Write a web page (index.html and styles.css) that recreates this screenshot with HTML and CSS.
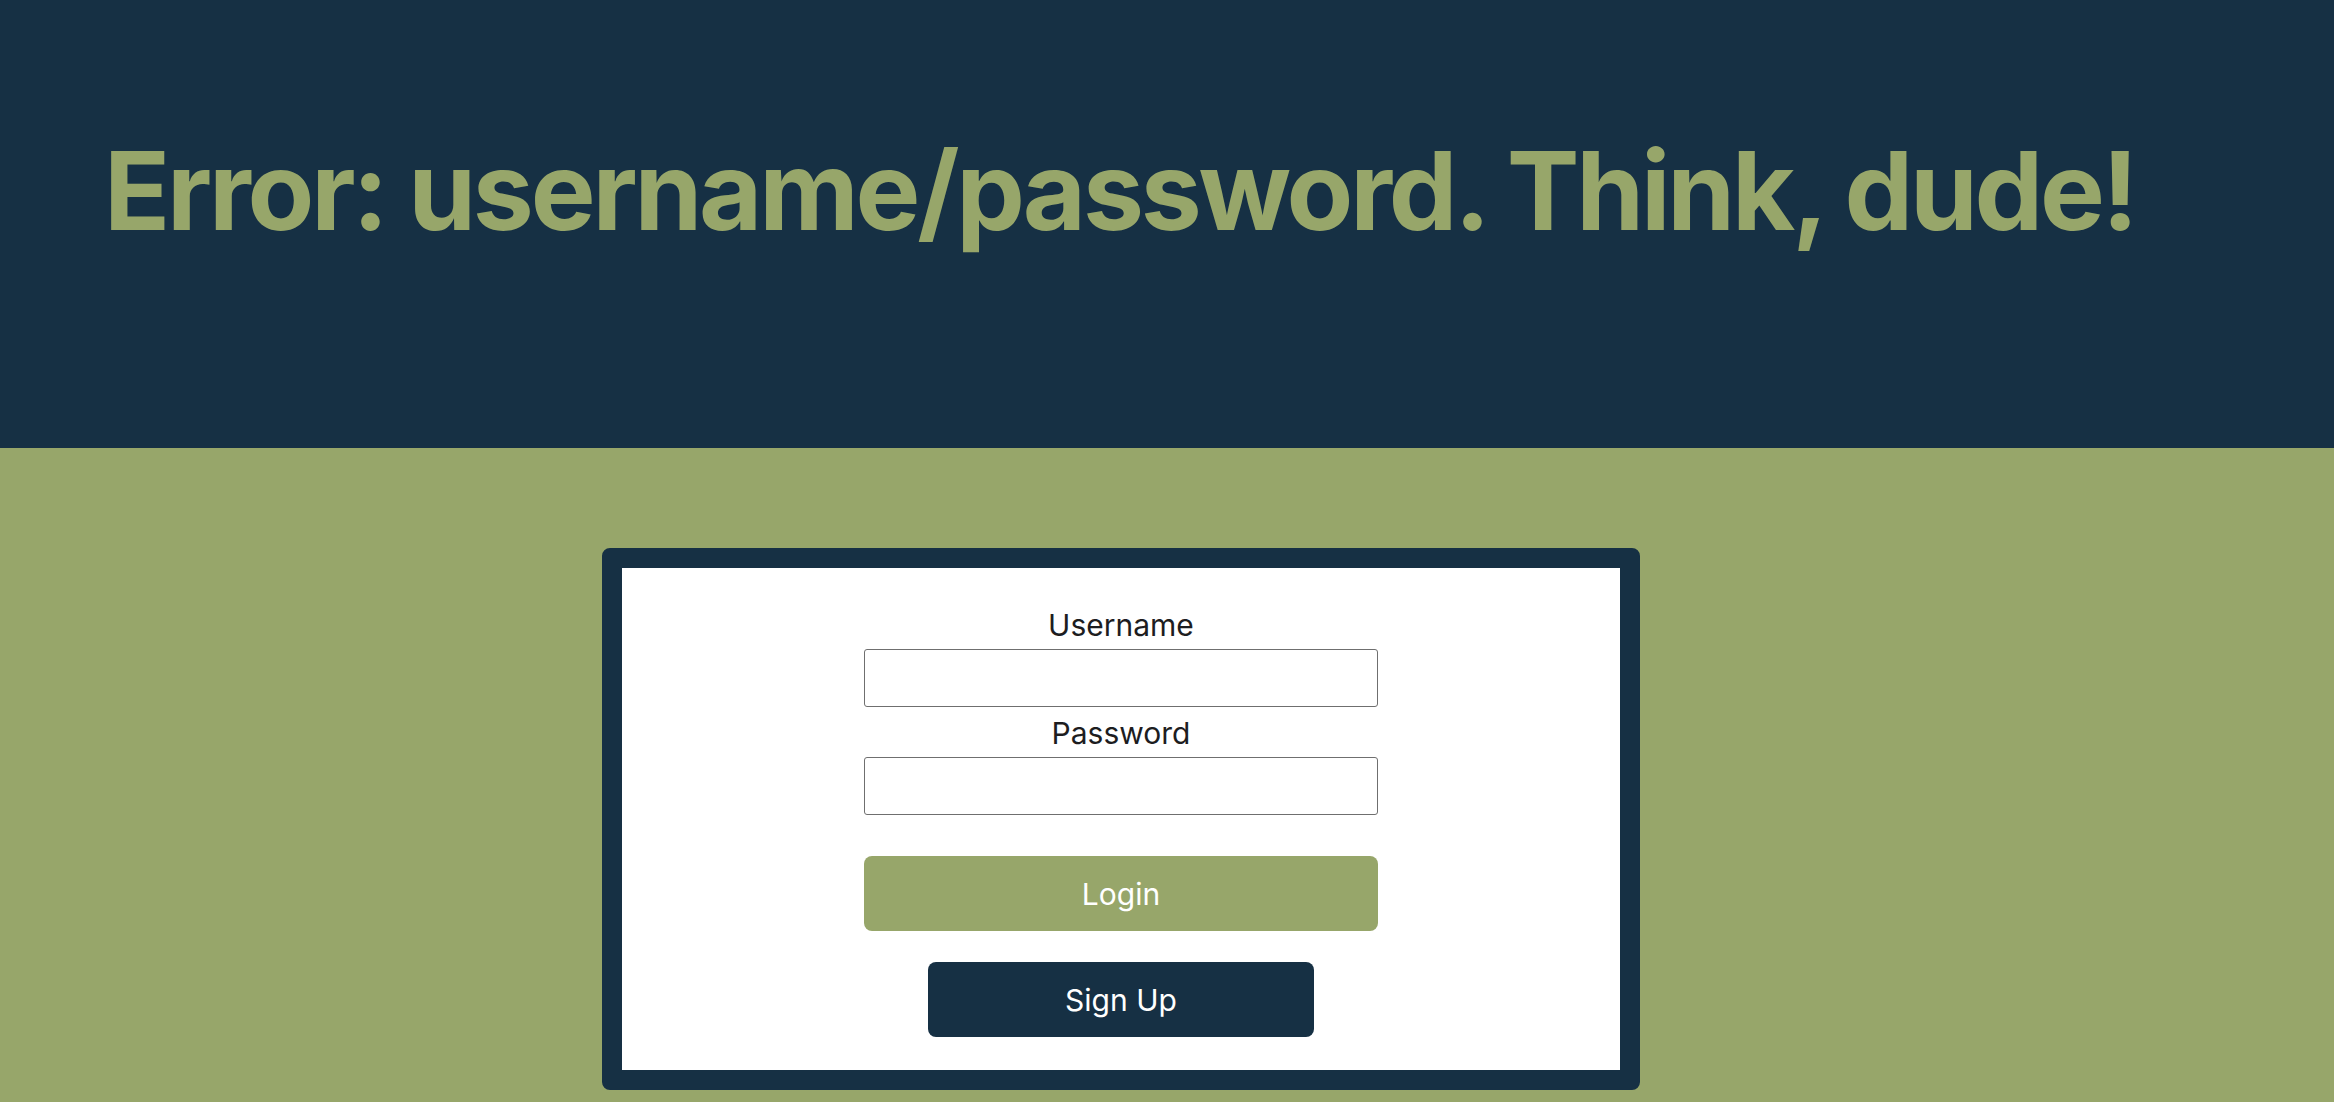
FILE: index.html
```html
<!DOCTYPE html>
<html lang="en">
<head>
<meta charset="utf-8">
<title>Login</title>
<link rel="stylesheet" href="styles.css">
</head>
<body>
<header class="banner">
  <h1 class="banner-title">Error: username/password. Think, dude!</h1>
</header>
<main class="stage">
  <section class="card">
    <form class="login-form">
      <label class="field-label" for="username">Username</label>
      <input class="field-input" id="username" type="text">
      <label class="field-label" for="password">Password</label>
      <input class="field-input" id="password" type="password">
      <button class="btn btn-login" type="button">Login</button>
      <button class="btn btn-signup" type="button">Sign Up</button>
    </form>
  </section>
</main>
</body>
</html>
```
FILE: styles.css
```css
html, body {
  margin: 0;
  padding: 0;
}
body {
  font-family: Inter, "Liberation Sans", sans-serif;
  background: #97a66a;
  height: 1102px;
  overflow: hidden;
}
.banner {
  background: #163044;
  height: 448px;
  box-sizing: border-box;
  padding: 136px 0 0 104px;
}
.banner-title {
  margin: 0;
  font-size: 109px;
  line-height: 1;
  font-weight: 700;
  color: #97a66a;
  letter-spacing: -3.2px;
  white-space: nowrap;
}
.stage {
  padding: 100px 0 0 602px;
}
.card {
  width: 1038px;
  height: 542px;
  box-sizing: border-box;
  border: 20px solid #163044;
  border-radius: 8px;
  background: #ffffff;
}
.login-form {
  display: flex;
  flex-direction: column;
  align-items: center;
  padding-top: 39px;
}
.field-label {
  font-size: 30px;
  line-height: 36px;
  color: #1d1d1f;
  margin-bottom: 6px;
}
.field-input {
  width: 514px;
  height: 58px;
  box-sizing: border-box;
  border: 1px solid #6f6f6f;
  border-radius: 3px;
  margin: 0 0 8px 0;
  padding: 0 8px;
  font-size: 24px;
  font-family: inherit;
}
.btn {
  height: 75px;
  border: none;
  border-radius: 8px;
  color: #ffffff;
  font-family: inherit;
  font-size: 30px;
  padding: 0;
  cursor: pointer;
}
.btn-login {
  width: 514px;
  background: #97a66a;
  margin-top: 33px;
}
.btn-signup {
  width: 386px;
  background: #163044;
  margin-top: 31px;
}
```
